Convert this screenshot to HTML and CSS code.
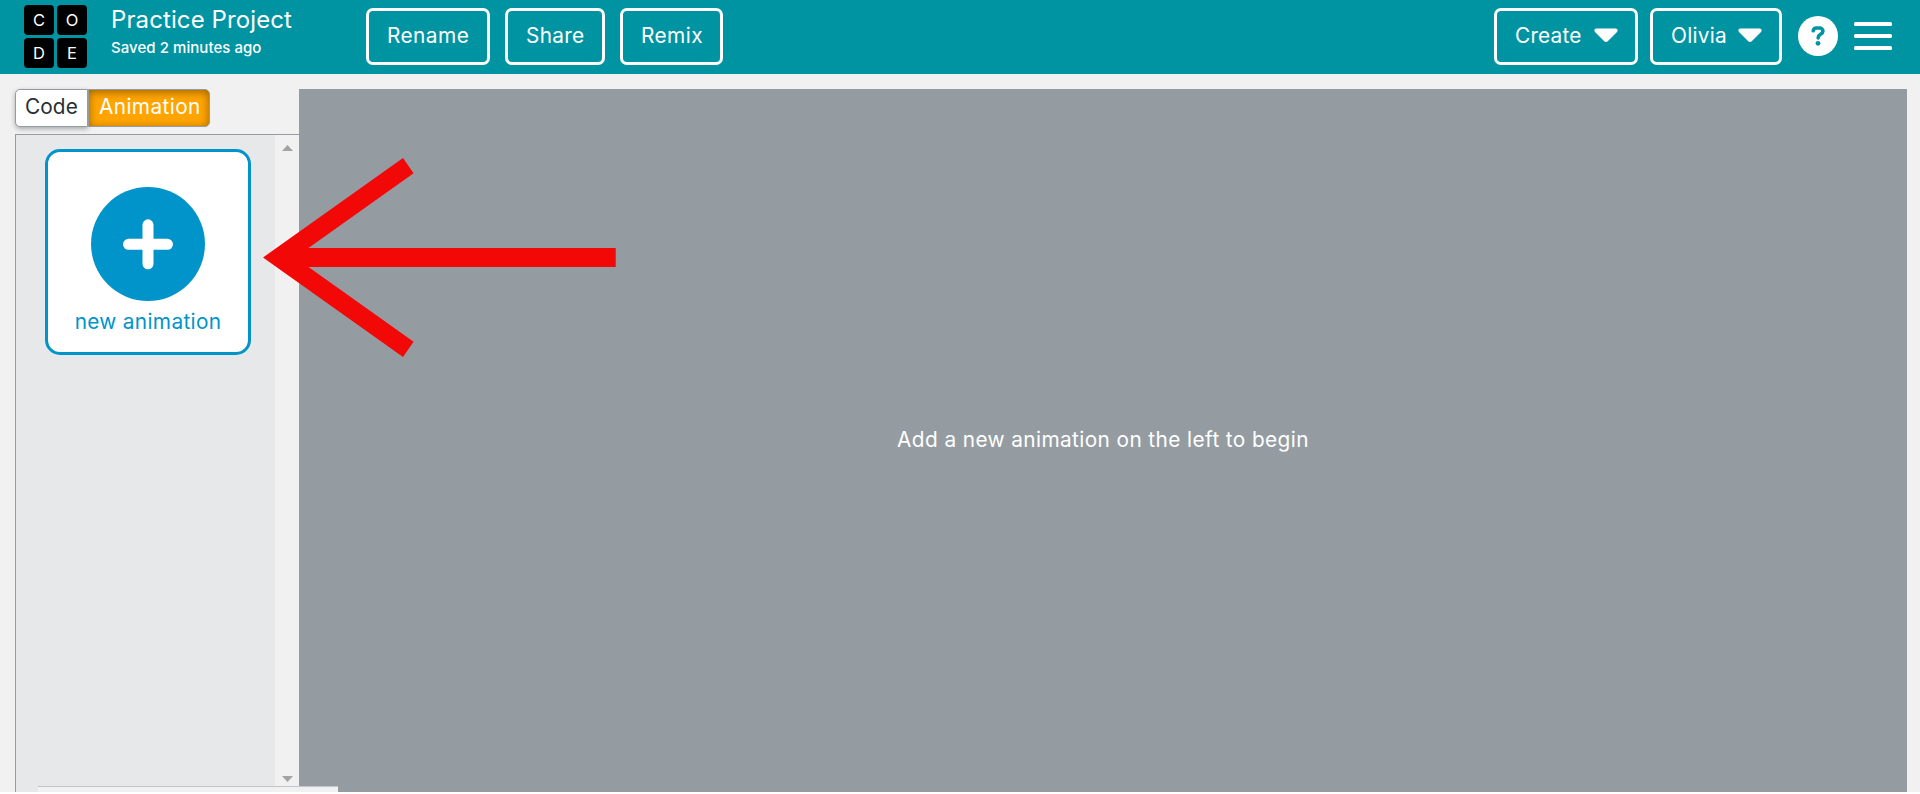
FILE: index.html
```
<!DOCTYPE html>
<html lang="en">
<head>
<meta charset="utf-8">
<title>Practice Project</title>
<link rel="stylesheet" href="styles.css">
</head>
<body>
<header class="header">
  <div class="logo"><span>C</span><span>O</span><span>D</span><span>E</span></div>
  <div class="project">
    <div class="project-name">Practice Project</div>
    <div class="project-saved">Saved 2 minutes ago</div>
  </div>
  <nav class="actions">
    <button class="btn rename"><span>Rename</span></button>
    <button class="btn share"><span>Share</span></button>
    <button class="btn remix"><span>Remix</span></button>
  </nav>
  <div class="account">
    <button class="btn create"><span>Create</span><svg class="caret" viewBox="0 0 24 15"><path d="M2 .5H22Q24.700 1.500 23 4L14 13Q12 15 10 13L1 4Q-.7 1.500 2 .5Z"/></svg></button>
    <button class="btn user"><span>Olivia</span><svg class="caret" viewBox="0 0 24 15"><path d="M2 .5H22Q24.700 1.500 23 4L14 13Q12 15 10 13L1 4Q-.7 1.500 2 .5Z"/></svg></button>
    <svg class="help" viewBox="0 0 40 40"><circle cx="20" cy="20" r="20" fill="#fff"/><path d="M15.200 14.800C15.600 12.700 17 12 18.500 12H21.500C23.600 12 24.900 13.500 24.900 15.200C24.900 18.500 20.200 18.200 20.200 21.500V22" fill="none" stroke="#0094a3" stroke-width="3.600" stroke-linecap="round"/><circle cx="20" cy="27.300" r="2.400" fill="#0094a3"/></svg>
    <svg class="menu" viewBox="0 0 38 28"><g fill="#fff"><rect width="38" height="4" rx="1.500"/><rect y="12" width="38" height="4" rx="1.500"/><rect y="24" width="38" height="4" rx="1.500"/></g></svg>
  </div>
</header>
<main class="workspace">
  <aside class="sidebar">
    <div class="tabs">
      <button class="tab code"><span>Code</span></button>
      <button class="tab active"><span>Animation</span></button>
    </div>
    <div class="panel">
      <div class="list">
        <div class="card">
          <svg class="plus" viewBox="0 0 114 114"><circle cx="57" cy="57" r="57" fill="#0094ca"/><path d="M37.500 57.300H76.500M57 37.800V76.800" stroke="#fff" stroke-width="11" stroke-linecap="round"/></svg>
          <span class="card-label">new animation</span>
        </div>
      </div>
      <div class="scrollbar">
        <svg viewBox="0 0 11 6"><path d="M0 6L5.500 0L11 6Z"/></svg>
        <svg viewBox="0 0 11 6"><path d="M0 0H11L5.500 6Z"/></svg>
      </div>
    </div>
  </aside>
  <section class="stage"><span>Add a new animation on the left to begin</span></section>
</main>
<div class="link-status"></div>
<svg class="arrow" viewBox="0 0 353 200"><path d="M0 99.500L140 0L150.600 15.300L45.500 90H352.700V109H45.500L150.600 183.700L140 199Z"/></svg>
</body>
</html>
```
FILE: styles.css
```
* { box-sizing: border-box; }
body { margin: 0; width: 1920px; height: 794px; overflow: hidden; background: #fff; color: #fff; font: 20.800px/24px Inter, "Noto Sans", sans-serif; }
button { font: inherit; color: inherit; cursor: pointer; }
svg { display: block; flex: none; }
span { white-space: nowrap; }

.header { display: flex; height: 74px; background: #0094a3; }
.logo { display: grid; grid-template-columns: 30px 30px; grid-template-rows: 30px 30px; gap: 3px; margin: 5px 0 0 24px; width: 63px; height: 63px; }
.logo span { display: grid; place-items: center; background: #000; border-radius: 4px; font-size: 16.500px; line-height: 20px; }
.project { width: 255px; margin-left: 24px; white-space: nowrap; }
.project-name { font-size: 24px; line-height: 28px; margin-top: 6px; letter-spacing: .1px; }
.project-saved { font-size: 15px; line-height: 18px; margin-top: 5px; font-weight: 500; letter-spacing: .05px; }
.actions { display: flex; gap: 15px; margin-top: 8px; }
.btn { display: flex; align-items: center; height: 57px; padding: 0 0 2px 18px; border: 3px solid #fff; border-radius: 7px; background: none; }
.rename { width: 124px; letter-spacing: .45px; }
.share { width: 100px; letter-spacing: .3px; }
.remix { width: 103px; letter-spacing: .45px; }
.account { display: flex; margin: 8px 28px 0 auto; }
.create { width: 144px; justify-content: space-between; padding-right: 17px; margin-right: 12px; letter-spacing: .2px; }
.user { width: 132px; justify-content: space-between; padding-right: 17px; margin-right: 16px; letter-spacing: .25px; }
.caret { width: 24px; height: 15px; fill: #fff; }
.help { width: 40px; height: 40px; margin: 8px 16px 0 0; }
.menu { width: 38px; height: 28px; margin-top: 14px; }

.workspace { display: flex; height: 718px; padding: 15px 13px 0 15px; background: #f1f1f1; }
.sidebar { width: 284px; display: flex; flex-direction: column; }
.tabs { display: flex; height: 38px; margin-bottom: 7px; }
.tab { height: 38px; border: 1px solid #949ca2; padding: 0 0 2px 10px; text-align: left; background: #fff; color: #292f36; }
.code { width: 73px; border-radius: 5px 0 0 5px; box-shadow: 0 2px 5px rgba(0,0,0,.3); letter-spacing: .1px; padding-left: 9px; }
.active { width: 122px; border-radius: 0 5px 5px 0; background: #ffa400; color: #fff; box-shadow: inset 0 2px 8px rgba(0,0,0,.4); letter-spacing: .4px; }
.panel { display: flex; flex: 1; border: solid #949ca2; border-width: 1px 0 0 1px; background: #e7e8ea; }
.list { flex: 1; padding: 14px 0 0 29px; }
.card { display: flex; flex-direction: column; align-items: center; width: 206px; height: 206px; padding-top: 35px; border: 3px solid #0094ca; border-radius: 15px; background: #fff; color: #0094ca; }
.plus { width: 114px; height: 114px; margin-right: 1px; }
.card-label { margin-top: 9px; letter-spacing: .33px; }
.scrollbar { display: flex; flex-direction: column; align-items: center; justify-content: space-between; width: 24px; padding: 10px 0 10px; background: #f1f1f1; }
.scrollbar svg { width: 11px; height: 6px; fill: #a3a3a3; }
.stage { display: grid; place-items: center; width: 1608px; flex: none; padding-bottom: 2px; background: #949ca2; letter-spacing: .4px; }

.link-status { position: absolute; left: 38px; top: 786px; width: 300px; height: 6px; border-top: 1px solid #c3c5c8; background: #f1f1f1; }
.arrow { position: absolute; left: 263px; top: 158px; width: 353px; height: 200px; fill: #f30808; }
```
